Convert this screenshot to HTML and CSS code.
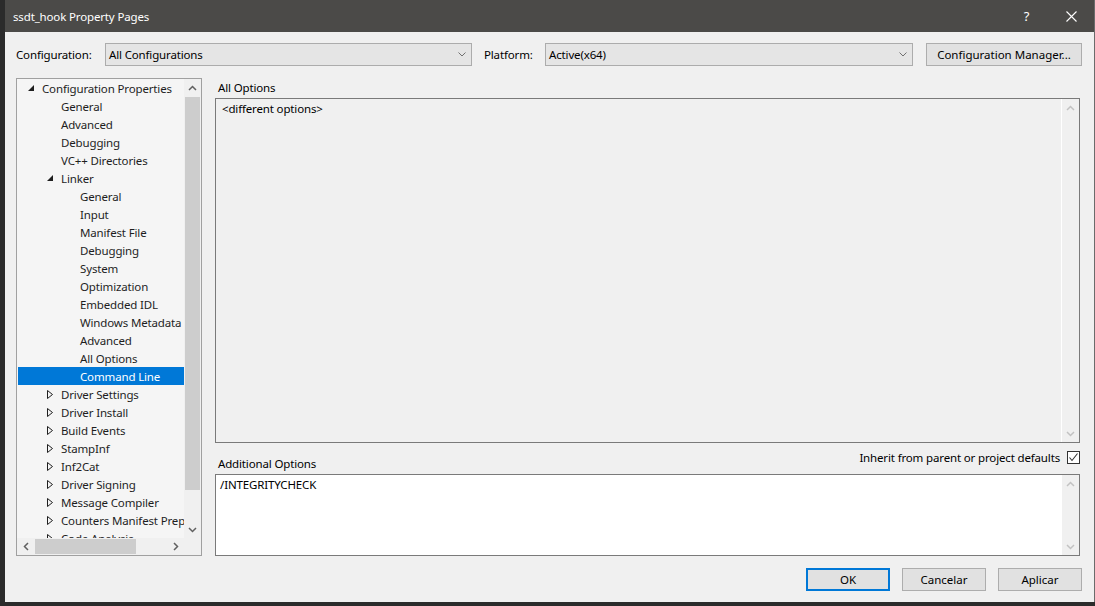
FILE: index.html
```html
<!DOCTYPE html>
<html>
<head>
    <title>ssdt_hook Property Pages</title>
    <link rel="stylesheet" href="styles.css">
</head>
<body>
<div class="window">
    <div class="titlebar">
        <span class="title">ssdt_hook Property Pages</span>
        <span class="title-btn">?</span>
        <span class="title-btn">
            <svg width="11" height="11" viewBox="0 0 11 11"><path d="M0.5 0.5 L10.5 10.5 M10.5 0.5 L0.5 10.5" stroke="#fff" stroke-width="1.1"/></svg>
        </span>
    </div>

    <div class="client">
        <div class="toprow">
            <span class="field-label">Configuration:</span>
            <div class="combo combo-config">
                <span>All Configurations</span>
                <svg class="combo-arrow" width="8" height="5" viewBox="0 0 8 5"><polyline points="0.5,0.5 4,4 7.5,0.5" fill="none" stroke="#707070"/></svg>
            </div>
            <span class="field-label platform-label">Platform:</span>
            <div class="combo combo-platform">
                <span>Active(x64)</span>
                <svg class="combo-arrow" width="8" height="5" viewBox="0 0 8 5"><polyline points="0.5,0.5 4,4 7.5,0.5" fill="none" stroke="#707070"/></svg>
            </div>
            <button class="btn btn-manager">Configuration Manager...</button>
        </div>

        <div class="main">
            <div class="tree">
                <div class="tree-items">
                    <div class="node lvl0"><span class="twisty"><svg width="6" height="6"><polygon points="6,0 6,6 0,6" fill="#1e1e1e"/></svg></span>Configuration Properties</div>
                    <div class="node lvl1"><span class="twisty"></span>General</div>
                    <div class="node lvl1"><span class="twisty"></span>Advanced</div>
                    <div class="node lvl1"><span class="twisty"></span>Debugging</div>
                    <div class="node lvl1"><span class="twisty"></span>VC++ Directories</div>
                    <div class="node lvl1"><span class="twisty"><svg width="6" height="6"><polygon points="6,0 6,6 0,6" fill="#1e1e1e"/></svg></span>Linker</div>
                    <div class="node lvl2"><span class="twisty"></span>General</div>
                    <div class="node lvl2"><span class="twisty"></span>Input</div>
                    <div class="node lvl2"><span class="twisty"></span>Manifest File</div>
                    <div class="node lvl2"><span class="twisty"></span>Debugging</div>
                    <div class="node lvl2"><span class="twisty"></span>System</div>
                    <div class="node lvl2"><span class="twisty"></span>Optimization</div>
                    <div class="node lvl2"><span class="twisty"></span>Embedded IDL</div>
                    <div class="node lvl2"><span class="twisty"></span>Windows Metadata</div>
                    <div class="node lvl2"><span class="twisty"></span>Advanced</div>
                    <div class="node lvl2"><span class="twisty"></span>All Options</div>
                    <div class="node lvl2 selected"><span class="twisty"></span>Command Line</div>
                    <div class="node lvl1"><span class="twisty"><svg width="6" height="9"><polygon points="0.5,0.5 5.5,4.5 0.5,8.5" fill="none" stroke="#1e1e1e"/></svg></span>Driver Settings</div>
                    <div class="node lvl1"><span class="twisty"><svg width="6" height="9"><polygon points="0.5,0.5 5.5,4.5 0.5,8.5" fill="none" stroke="#1e1e1e"/></svg></span>Driver Install</div>
                    <div class="node lvl1"><span class="twisty"><svg width="6" height="9"><polygon points="0.5,0.5 5.5,4.5 0.5,8.5" fill="none" stroke="#1e1e1e"/></svg></span>Build Events</div>
                    <div class="node lvl1"><span class="twisty"><svg width="6" height="9"><polygon points="0.5,0.5 5.5,4.5 0.5,8.5" fill="none" stroke="#1e1e1e"/></svg></span>StampInf</div>
                    <div class="node lvl1"><span class="twisty"><svg width="6" height="9"><polygon points="0.5,0.5 5.5,4.5 0.5,8.5" fill="none" stroke="#1e1e1e"/></svg></span>Inf2Cat</div>
                    <div class="node lvl1"><span class="twisty"><svg width="6" height="9"><polygon points="0.5,0.5 5.5,4.5 0.5,8.5" fill="none" stroke="#1e1e1e"/></svg></span>Driver Signing</div>
                    <div class="node lvl1"><span class="twisty"><svg width="6" height="9"><polygon points="0.5,0.5 5.5,4.5 0.5,8.5" fill="none" stroke="#1e1e1e"/></svg></span>Message Compiler</div>
                    <div class="node lvl1"><span class="twisty"><svg width="6" height="9"><polygon points="0.5,0.5 5.5,4.5 0.5,8.5" fill="none" stroke="#1e1e1e"/></svg></span>Counters Manifest Preprocessor</div>
                    <div class="node lvl1"><span class="twisty"><svg width="6" height="9"><polygon points="0.5,0.5 5.5,4.5 0.5,8.5" fill="none" stroke="#1e1e1e"/></svg></span>Code Analysis</div>
                </div>

                <div class="vscroll">
                    <span class="sb-btn"><svg width="9" height="6" viewBox="0 0 9 6"><polyline points="1,5 4.5,1.5 8,5" fill="none" stroke="#606060" stroke-width="1.5"/></svg></span>
                    <span class="vthumb"></span>
                    <span class="sb-track"></span>
                    <span class="sb-btn"><svg width="9" height="6" viewBox="0 0 9 6"><polyline points="1,1 4.5,4.5 8,1" fill="none" stroke="#606060" stroke-width="1.5"/></svg></span>
                </div>
                <div class="hscroll">
                    <span class="sb-btn"><svg width="6" height="9" viewBox="0 0 6 9"><polyline points="5,1 1.5,4.5 5,8" fill="none" stroke="#606060" stroke-width="1.5"/></svg></span>
                    <span class="hthumb"></span>
                    <span class="sb-track"></span>
                    <span class="sb-btn"><svg width="6" height="9" viewBox="0 0 6 9"><polyline points="1,1 4.5,4.5 1,8" fill="none" stroke="#606060" stroke-width="1.5"/></svg></span>
                </div>
                <div class="corner"></div>
            </div>

            <div class="pane">
                <div class="pane-title">All Options</div>
                <div class="textbox options-box">
                    <div class="tb-text">&lt;different options&gt;</div>
                    <div class="tb-scroll">
                        <span class="sb-btn"><svg width="9" height="6" viewBox="0 0 9 6"><polyline points="1,5 4.5,1.5 8,5" fill="none" stroke="#c2c2c2" stroke-width="1.5"/></svg></span>
                        <span class="sb-btn"><svg width="9" height="6" viewBox="0 0 9 6"><polyline points="1,1 4.5,4.5 8,1" fill="none" stroke="#c2c2c2" stroke-width="1.5"/></svg></span>
                    </div>
                </div>

                <div class="options-row">
                    <div class="pane-title">Additional Options</div>
                    <label class="inherit">
                        Inherit from parent or project defaults
                        <span class="check"><svg width="11" height="11" viewBox="0 0 11 11"><polyline points="1.5,5.5 4,8.5 9.5,1.5" fill="none" stroke="#333" stroke-width="1.1"/></svg></span>
                    </label>
                </div>

                <div class="textbox extra-box">
                    <div class="tb-text">/INTEGRITYCHECK</div>
                    <div class="tb-scroll">
                        <span class="sb-btn"><svg width="9" height="6" viewBox="0 0 9 6"><polyline points="1,5 4.5,1.5 8,5" fill="none" stroke="#c2c2c2" stroke-width="1.5"/></svg></span>
                        <span class="sb-btn"><svg width="9" height="6" viewBox="0 0 9 6"><polyline points="1,1 4.5,4.5 8,1" fill="none" stroke="#c2c2c2" stroke-width="1.5"/></svg></span>
                    </div>
                </div>
            </div>
        </div>

        <div class="footer">
            <button class="btn btn-default">OK</button>
            <button class="btn">Cancelar</button>
            <button class="btn">Aplicar</button>
        </div>
    </div>
</div>
</body>
</html>
```

FILE: styles.css
```css
* {
    margin: 0;
    padding: 0;
    box-sizing: border-box;
}

body {
    width: 1095px;
    height: 606px;
    overflow: hidden;
    background: #2b2b2b;
    font-family: "Segoe UI", "Noto Sans", sans-serif;
    font-size: 11.5px;
    letter-spacing: -0.15px;
    color: #000;
}

.window {
    margin-left: 5px;
    width: 1090px;
    height: 602px;
    display: flex;
    flex-direction: column;
    border-right: 1px solid #6b6b6b;
}

/* title bar */
.titlebar {
    height: 32px;
    flex-shrink: 0;
    display: flex;
    align-items: center;
    padding-left: 8px;
    background: #4b4a48;
    color: #fff;
}

.title {
    flex-grow: 1;
}

.title-btn {
    width: 45px;
    height: 32px;
    display: flex;
    align-items: center;
    justify-content: center;
    font-size: 13px;
}

/* dialog body */
.client {
    flex-grow: 1;
    display: flex;
    flex-direction: column;
    padding: 11px 12px 0 11px;
    background: #f0f0f0;
}

.toprow {
    display: flex;
    align-items: center;
    height: 23px;
}

.field-label {
    width: 89px;
}

.platform-label {
    width: 61px;
    margin-left: 12px;
}

.combo {
    height: 23px;
    display: flex;
    align-items: center;
    justify-content: space-between;
    padding: 0 5px 0 3px;
    background: #e5e5e5;
    border: 1px solid #acacac;
}

.combo-config {
    width: 367px;
}

.combo-platform {
    width: 368px;
}

.btn {
    height: 23px;
    font: inherit;
    color: #000;
    background: #e1e1e1;
    border: 1px solid #adadad;
}

.btn-manager {
    width: 156px;
    margin-left: auto;
}

.main {
    display: flex;
    height: 478px;
    margin-top: 12px;
}

/* property tree */
.tree {
    width: 186px;
    flex-shrink: 0;
    display: grid;
    grid-template-columns: 1fr 17px;
    grid-template-rows: 1fr 17px;
    background: #f0f0f0;
    border: 1px solid #a0a0a0;
}

.tree-items {
    overflow: hidden;
    background: #f5f5f5;
}

.node {
    height: 18px;
    margin-left: 1px;
    display: flex;
    align-items: center;
    white-space: nowrap;
    color: #1e1e1e;
}

.lvl0 {
    padding-left: 10px;
}

.lvl1 {
    padding-left: 29px;
}

.lvl2 {
    padding-left: 48px;
}

.twisty {
    width: 14px;
    flex-shrink: 0;
    display: flex;
    align-items: center;
}

.node.selected {
    background: #0078d7;
    color: #fff;
}

.vscroll,
.hscroll {
    display: flex;
    align-items: center;
    background: #f0f0f0;
}

.vscroll {
    flex-direction: column;
}

.sb-btn {
    width: 17px;
    height: 17px;
    flex-shrink: 0;
    display: flex;
    align-items: center;
    justify-content: center;
}

.sb-track {
    flex-grow: 1;
}

.vthumb {
    width: 15px;
    height: 393px;
    margin-top: 1px;
    background: #cdcdcd;
}

.hthumb {
    width: 101px;
    height: 15px;
    margin-left: 1px;
    background: #cdcdcd;
}

/* right pane */
.pane {
    width: 865px;
    margin-left: 13px;
    display: flex;
    flex-direction: column;
}

.pane-title {
    height: 20px;
    padding-left: 3px;
    line-height: 19px;
}

.textbox {
    display: flex;
    border: 1px solid #7a7a7a;
}

.options-box {
    height: 345px;
    background: #f0f0f0;
}

.extra-box {
    height: 82px;
    background: #fff;
}

.tb-text {
    flex-grow: 1;
    line-height: 18px;
    padding: 1px 0 0 6px;
}

.extra-box .tb-text {
    padding: 1px 0 0 4px;
}

.tb-scroll {
    width: 18px;
    display: flex;
    flex-direction: column;
    justify-content: space-between;
    background: #f0f0f0;
    border-left: 1px solid #fff;
}

.options-row {
    height: 31px;
    display: flex;
    justify-content: space-between;
}

.options-row .pane-title {
    align-self: flex-end;
    height: 19px;
    line-height: 18px;
}

.inherit {
    height: 13px;
    margin-top: 8px;
    display: flex;
    align-items: center;
    gap: 7px;
}

.check {
    width: 13px;
    height: 13px;
    display: flex;
    align-items: center;
    justify-content: center;
    background: #fff;
    border: 1px solid #333;
}

/* dialog buttons */
.footer {
    display: flex;
    justify-content: flex-end;
    gap: 12px;
    margin-top: 12px;
}

.footer .btn {
    width: 84px;
}

.footer .btn-default {
    border: 2px solid #0078d7;
}
```
